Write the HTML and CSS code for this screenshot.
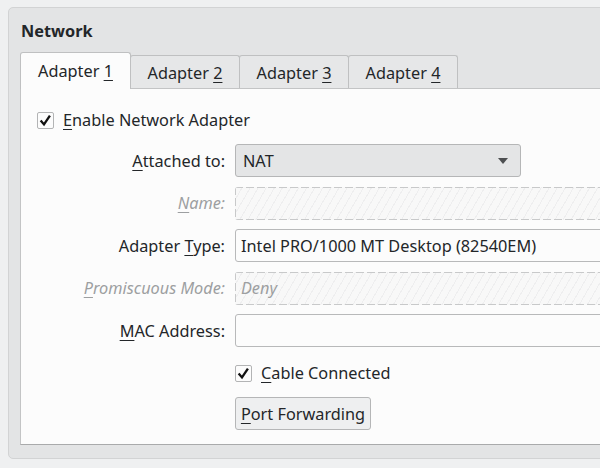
FILE: index.html
```html
<!DOCTYPE html>
<html>
<head>
    <title>Network</title>
    <link rel="stylesheet" href="styles.css">
</head>
<body>

<div class="group">
    <div class="group-title">Network</div>

    <div class="tab-bar">
        <div class="tab active"><span>Adapter <u>1</u></span></div>
        <div class="tab"><span>Adapter <u>2</u></span></div>
        <div class="tab"><span>Adapter <u>3</u></span></div>
        <div class="tab"><span>Adapter <u>4</u></span></div>
    </div>

    <div class="tab-panel">
        <div class="check-row enable-row">
            <span class="checkbox">
                <svg width="17" height="17" viewBox="0 0 17 17"><path d="M3 8.5 L6.8 13 L13.5 3" fill="none" stroke="#111" stroke-width="2.6"/></svg>
            </span>
            <span><u>E</u>nable Network Adapter</span>
        </div>

        <div class="form-grid">
            <label class="form-label"><u>A</u>ttached to:</label>
            <div class="combo">
                <span>NAT</span>
                <svg width="10" height="6" viewBox="0 0 10 6"><path d="M0 0 L10 0 L5 6 Z" fill="#4d4f51"/></svg>
            </div>

            <label class="form-label disabled"><u>N</u>ame:</label>
            <div class="field hatched"></div>

            <label class="form-label">Adapter <u>T</u>ype:</label>
            <div class="field">Intel PRO/1000 MT Desktop (82540EM)</div>

            <label class="form-label disabled"><u>P</u>romiscuous Mode:</label>
            <div class="field hatched disabled">Deny</div>

            <label class="form-label"><u>M</u>AC Address:</label>
            <div class="field"></div>

            <div class="check-row cable-row">
                <span class="checkbox">
                    <svg width="17" height="17" viewBox="0 0 17 17"><path d="M3 8.5 L6.8 13 L13.5 3" fill="none" stroke="#111" stroke-width="2.6"/></svg>
                </span>
                <span><u>C</u>able Connected</span>
            </div>

            <div class="button-row">
                <button class="push-button"><u>P</u>ort Forwarding</button>
            </div>
        </div>
    </div>
</div>

</body>
</html>
```

FILE: styles.css
```css
body {
    margin: 0;
    background: #eff0f1;
    font-family: "Noto Sans", "Open Sans", sans-serif;
    font-size: 16.3px;
    color: #232629;
    overflow: hidden;
    height: 468px;
}
u {
    text-decoration: underline;
    text-underline-offset: 3px;
    text-decoration-thickness: 1px;
}
.group {
    margin: 7px 0 0 8px;
    width: 640px;
    background: #e3e4e5;
    border: 1px solid #d2d3d4;
    border-radius: 5px;
    padding: 12px 0 13px 11px;
}
.group-title {
    font-weight: bold;
    line-height: 22px;
    padding-left: 1px;
}
.tab-bar {
    display: flex;
    align-items: flex-end;
    margin-top: 10px;
    height: 36px;
    position: relative;
    z-index: 1;
}
.tab {
    width: 110px;
    height: 33px;
    box-sizing: border-box;
    border: 1px solid #bfc0c1;
    border-bottom: none;
    border-radius: 3px 3px 0 0;
    background: #e6e7e8;
    display: flex;
    align-items: center;
    justify-content: center;
    margin-right: -1px;
    padding-top: 1px;
}
.tab.active {
    width: 111px;
    height: 37px;
    background: #fcfcfc;
    padding-top: 0;
    margin-bottom: -1px;
}
.tab-panel {
    background: #fcfcfc;
    border: 1px solid #c3c4c5;
    border-bottom-color: #a9aaab;
    padding: 21px 0 14px 0;
}
.check-row {
    display: flex;
    align-items: center;
    gap: 9px;
    height: 20px;
}
.enable-row {
    padding-left: 16px;
}
.checkbox {
    width: 17px;
    height: 17px;
    box-sizing: border-box;
    border: 1px solid #b3b4b5;
    border-radius: 2px;
    background: #fcfcfc;
    display: flex;
    align-items: center;
    justify-content: center;
}
.checkbox svg {
    display: block;
}
.form-grid {
    display: grid;
    grid-template-columns: 204px 1fr;
    column-gap: 10px;
    row-gap: 9.5px;
    margin-top: 14px;
}
.form-label {
    text-align: right;
    align-self: center;
}
.form-label.disabled {
    font-style: italic;
    color: #9d9fa1;
}
.combo {
    width: 286px;
    height: 33px;
    box-sizing: border-box;
    background: #e4e5e6;
    border: 1px solid #b5b6b7;
    border-radius: 3px;
    display: flex;
    align-items: center;
    justify-content: space-between;
    padding: 0 12px 0 7px;
}
.field {
    height: 33px;
    box-sizing: border-box;
    background: #fcfcfc;
    border: 1px solid #b8b9ba;
    border-radius: 3px;
    display: flex;
    align-items: center;
    padding: 0 5px;
}
.field.hatched {
    border: none;
    background:
        repeating-linear-gradient(90deg, #c8c9ca 0 8px, transparent 8px 11px) top left / 100% 1px no-repeat,
        repeating-linear-gradient(90deg, #c8c9ca 0 8px, transparent 8px 11px) bottom left / 100% 1px no-repeat,
        repeating-linear-gradient(180deg, #c8c9ca 0 8px, transparent 8px 11px) top left / 1px 100% no-repeat,
        repeating-linear-gradient(120deg, #f8f8f8 0 6px, #eeeeef 6px 7px);
    padding-left: 6px;
}
.field.disabled {
    font-style: italic;
    color: #9d9fa1;
}
.cable-row {
    grid-column: 2;
    margin-top: 6.5px;
}
.button-row {
    grid-column: 2;
    margin-top: 4px;
}
.push-button {
    font-family: inherit;
    font-size: 16.3px;
    color: #232629;
    height: 33px;
    width: 136px;
    padding: 1px 4px 0;
    background: #eeeff0;
    border: 1px solid #b5b6b7;
    border-radius: 3px;
}
```
